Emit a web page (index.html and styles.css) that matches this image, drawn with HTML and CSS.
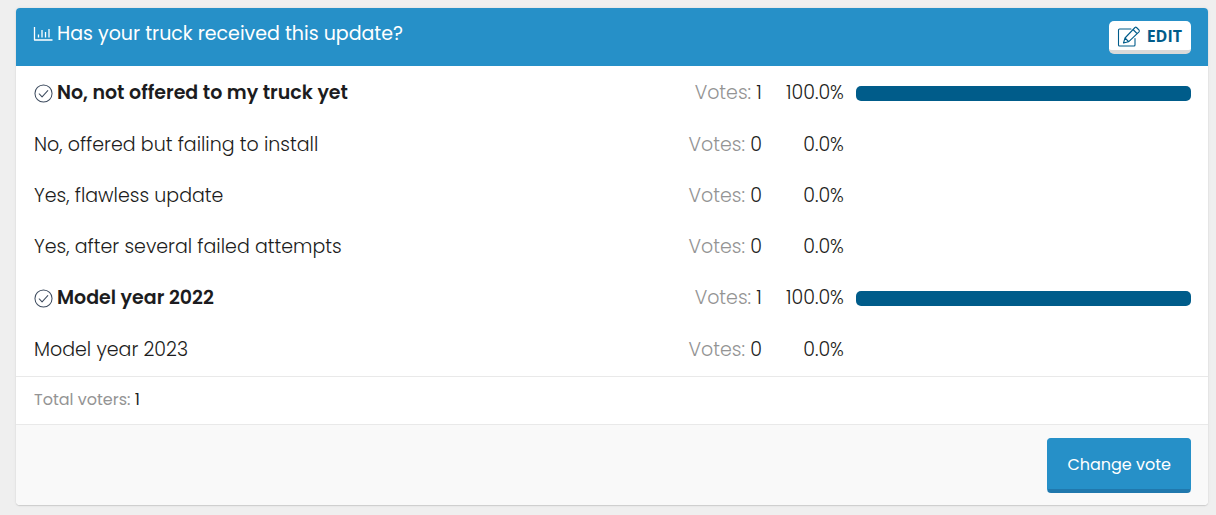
FILE: index.html
```html
<!DOCTYPE html>
<html lang="en">
<head>
<meta charset="utf-8">
<meta name="viewport" content="width=device-width, initial-scale=1">
<title>Has your truck received this update?</title>
<link rel="stylesheet" href="styles.css">
</head>
<body>
<svg class="sprite" aria-hidden="true">
  <symbol id="check" viewBox="0 0 20 20"><circle cx="10" cy="10" r="9"/><path d="M5.5 10.5l3 3 6-6.5"/></symbol>
</svg>
<main class="poll">
  <header class="poll-header">
    <h1 class="poll-title">
      <svg class="chart-icon" viewBox="0 0 20 16" aria-hidden="true"><path d="M1.500 1v13h18M5.500 11.500V8.500M9 11.500V4M12.500 11.500V6M16 11.500V3"/></svg>
      <span>Has your truck received this update?</span>
    </h1>
    <button class="edit-button" type="button">
      <svg class="edit-icon" viewBox="0 0 24 22" aria-hidden="true"><path d="M14 3H2.500Q1.500 3 1.500 4V19Q1.500 20 2.500 20H17Q18 20 18 19V12.500M6.500 17l1.500-5L18 1.500Q18.800.700 19.500 1.500L22 4Q22.800 5 22 5.800L11.500 15.800zM16 3.500l4 4M8 12l3.500 3.500"/></svg>
      <span>EDIT</span>
    </button>
  </header>
  <ul class="results">
    <li class="result voted">
      <span class="answer"><svg class="check-icon" role="img" aria-label="Your vote"><use href="#check"/></svg><span>No, not offered to my truck yet</span></span>
      <span class="votes"><span class="muted">Votes:</span> 1</span><span class="percent">100.0%</span>
      <span class="track"><span class="bar" style="width: 100%"></span></span>
    </li>
    <li class="result">
      <span class="answer">No, offered but failing to install</span>
      <span class="votes"><span class="muted">Votes:</span> 0</span><span class="percent">0.0%</span>
      <span class="track"></span>
    </li>
    <li class="result">
      <span class="answer">Yes, flawless update</span>
      <span class="votes"><span class="muted">Votes:</span> 0</span><span class="percent">0.0%</span>
      <span class="track"></span>
    </li>
    <li class="result">
      <span class="answer">Yes, after several failed attempts</span>
      <span class="votes"><span class="muted">Votes:</span> 0</span><span class="percent">0.0%</span>
      <span class="track"></span>
    </li>
    <li class="result voted">
      <span class="answer"><svg class="check-icon" role="img" aria-label="Your vote"><use href="#check"/></svg><span>Model year 2022</span></span>
      <span class="votes"><span class="muted">Votes:</span> 1</span><span class="percent">100.0%</span>
      <span class="track"><span class="bar" style="width: 100%"></span></span>
    </li>
    <li class="result">
      <span class="answer">Model year 2023</span>
      <span class="votes"><span class="muted">Votes:</span> 0</span><span class="percent">0.0%</span>
      <span class="track"></span>
    </li>
  </ul>
  <p class="total"><span class="muted">Total voters:</span> 1</p>
  <footer class="poll-footer"><button class="vote-button" type="button">Change vote</button></footer>
</main>
</body>
</html>
```
FILE: styles.css
```css
* { box-sizing: border-box; }
body {
  margin: 0;
  padding: 8px 8px 10px 16px;
  background: #efefef;
  color: #1c1c20;
  font-family: Poppins, Inter, "Open Sans", sans-serif;
  font-weight: 300;
}
.sprite { display: none; }
svg { flex: none; fill: none; stroke: currentColor; stroke-linecap: round; stroke-linejoin: round; }
.poll {
  overflow: hidden;
  border-radius: 4px;
  background: #fff;
  box-shadow: 0 1px 1px #ccc, 0 0 3px #ddd;
}
.poll-header {
  display: flex;
  justify-content: space-between;
  align-items: flex-start;
  min-height: 58px;
  padding: 12px 17px;
  background: #2690c8;
  color: #fff;
}
.poll-title {
  display: flex;
  align-items: center;
  gap: 4px;
  margin: 0;
  font-size: 19px;
  line-height: 28px;
  font-weight: 400;
}
.chart-icon { width: 20px; height: 16px; stroke-width: 1.3; stroke-linecap: butt; }
.edit-button {
  display: flex;
  align-items: center;
  gap: 6px;
  height: 33px;
  margin-top: 1px;
  padding: 0 9px 2px 8px;
  border: 0;
  border-bottom: 4px solid #d9d9d9;
  border-radius: 5px;
  background: #fff;
  color: #005c8a;
  font: 700 16px/24px "Open Sans", sans-serif;
}
.edit-icon { width: 24px; height: 22px; margin-top: 4px; stroke-width: 1.1; }
.edit-button span { margin-top: 3px; }
.results { margin: 0; padding: 1px 17px 1px 18px; list-style: none; }
.result {
  display: grid;
  grid-template-columns: 1fr auto 82px 30%;
  align-items: center;
  height: 51px;
  font-size: 19px;
  line-height: 26px;
}
.voted { height: 52px; }
.answer { display: flex; align-items: center; gap: 4px; }
.voted .answer { font-weight: 600; }
.check-icon { width: 19px; height: 19px; color: #3f4d60; stroke-width: 1.1; }
.votes, .percent { text-align: right; }
.muted { color: #949494; }
.track { padding-left: 12px; }
.bar { display: block; height: 15px; border-radius: 5px; background: #005c8a; }
.total {
  margin: 0;
  padding: 11px 18px 12px;
  border-top: 1px solid #e9e9e9;
  font-size: 16px;
  line-height: 24px;
  font-weight: 400;
}
.poll-footer {
  display: flex;
  justify-content: flex-end;
  padding: 13px 17px 12px;
  border-top: 1px solid #e9e9e9;
  background: #f9f9f9;
}
.vote-button {
  padding: 14px 19px 13px;
  border: 1px solid #2690c8;
  border-bottom: 4px solid #2078ad;
  border-radius: 4px;
  background: #2690c8;
  color: #fff;
  font: 400 16px/23px Poppins, Inter, "Open Sans", sans-serif;
}
```
